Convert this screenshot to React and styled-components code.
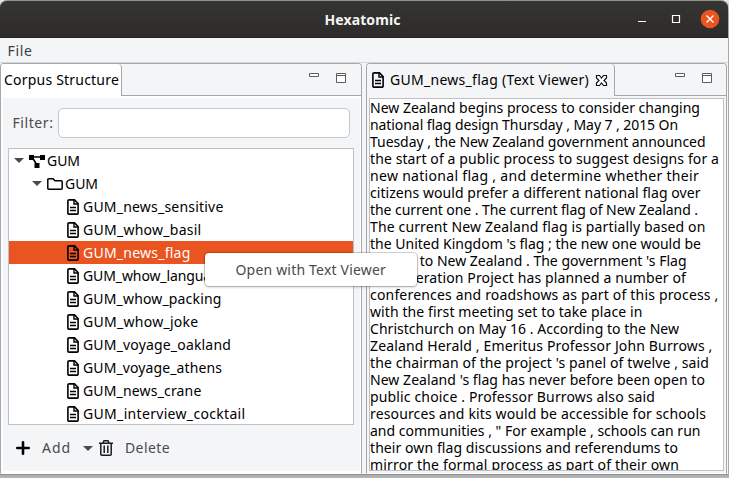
import React, { useLayoutEffect, useRef, useState } from "react";
import styled, { createGlobalStyle } from "styled-components";

const GlobalStyle = createGlobalStyle`
  * { box-sizing: border-box; }
  body { margin: 0; overflow: hidden; background: #b0b0b0; }
`;

const Window = styled.div`
  position: relative;
  width: 729px;
  height: 478px;
  padding-right: 1px;
  display: flex;
  flex-direction: column;
  overflow: hidden;
  background: linear-gradient(#e8e8e8 0, #a8a8a8 12px, #a8a8a8 473px, #b6b6b6 478px);
  font-family: "Noto Sans", sans-serif;
  font-size: 14px;
  color: #000;
`;

const TitleBar = styled.header`
  flex: none;
  height: 38px;
  display: grid;
  grid-template-columns: 1fr auto 1fr;
  align-items: center;
  border-top: 1px solid #91938e;
  border-bottom: 1px solid #242223;
  border-radius: 7px 7px 0 0;
  background: linear-gradient(#353532, #2d2b2b);
  color: #f4f4f2;
  font-weight: 700;
`;

const Title = styled.h1`
  grid-column: 2;
  margin: 2px 3px 0 0;
  font-size: 14px;
  line-height: 20px;
`;

const WindowControls = styled.div`
  display: flex;
  justify-content: flex-end;
  padding-right: 8px;
`;

const MenuBar = styled.nav`
  flex: none;
  height: 25px;
  padding: 3px 7.5px;
  background: #f4f5f7;
  border-bottom: 1px solid #d5d7d9;
  line-height: 20px;
  color: #3d3d3d;
`;

const Workbench = styled.main`
  flex: none;
  height: 412px;
  display: grid;
  grid-template-columns: 362px 361px;
  column-gap: 4px;
  padding-right: 1px;
  background: #f4f5f7;
  border-bottom: 1px solid #939393;
`;

const Panel = styled.section`
  min-width: 0;
  display: flex;
  flex-direction: column;
  border: 1px solid #a5a8aa;
  border-bottom-color: #fff;
  border-radius: 4px 4px 0 0;
  background: #fff;
  overflow: hidden;
`;

const TabBar = styled.div`
  flex: none;
  height: 32px;
  display: flex;
  background: #f4f5f7;
`;

const Tab = styled.div`
  width: ${(p) => p.$width}px;
  display: flex;
  align-items: center;
  padding-left: ${(p) => p.$inset}px;
  border-right: 1px solid #a5a8aa;
  border-radius: 0 4px 0 0;
  background: ${(p) => (p.$active ? "#fff" : "#f4f5f7")};

  & > span { margin-bottom: 2px; }
`;

const TabTools = styled.div`
  flex: 1;
  display: flex;
  justify-content: flex-end;
  padding: 8px ${(p) => p.$end}px 0 0;
  border-bottom: 1px solid #a5a8aa;
`;

const Explorer = styled.div`
  flex: 1;
  min-height: 0;
  margin: 2px 1px 2px 2px;
  padding: 10px 5px 0;
  background: #f4f5f7;
  color: #4a4a4a;
`;

const FilterRow = styled.label`
  display: flex;
  align-items: center;
  height: 30px;
  padding: 0 5px 0 4.5px;

  & > span { margin-bottom: 2px; }
`;

const FilterInput = styled.input`
  width: 291.5px;
  height: 30px;
  margin-left: 4.5px;
  padding: 0 8px;
  border: 1px solid #c2c7ce;
  border-radius: 5px;
  background: #fff;
  font: inherit;
  outline: none;
`;

const Tree = styled.ul`
  width: 346px;
  height: 277px;
  margin: 10px 0 0;
  padding: 0;
  list-style: none;
  overflow: hidden;
  border: 1px solid #bcc1c8;
  background: #fff;
  color: #000;
`;

const TreeRow = styled.li`
  height: 23px;
  display: flex;
  align-items: center;
  line-height: 21px;
  padding-left: ${(p) => p.$indent}px;
  background: ${(p) => (p.$selected ? "#e95420" : "transparent")};

  & > span { color: ${(p) => (p.$selected ? "#fff" : "#000")}; }
`;

const Glyph = styled.svg`
  flex: none;
  display: block;
  overflow: visible;
  margin-left: ${(p) => p.$before || 0}px;
  margin-right: ${(p) => p.$after || 0}px;
`;

const Actions = styled.div`
  height: 46px;
  display: flex;
  align-items: center;
  padding-left: 7px;
  color: #4a4a4a;

  & > span { margin-bottom: 2px; }
`;

const Viewer = styled.div`
  flex: 1;
  min-height: 0;
  margin: 2px;
  border: 1px solid #bcc1c8;
  background: #fff;
  overflow: hidden;
`;

const ViewerBody = styled.div`
  flex: 1;
  min-height: 0;
  display: flex;
  flex-direction: column;
  background: #f4f5f7;
`;

const Line = styled.div`
  height: 17px;
  line-height: 17px;
`;

const ContextMenu = styled.div`
  position: absolute;
  left: 205px;
  top: 253px;
  width: 212px;
  height: 33px;
  padding: 6px 0 0 30.5px;
  border-radius: 4px;
  background: #fff;
  box-shadow: 0 0 0 1px rgba(0, 0, 0, 0.16), 0 1px 3px rgba(0, 0, 0, 0.25);
  color: #4a4a4a;
  line-height: 21px;
`;

const Tracked = styled.span`
  display: inline-block;
  flex: none;
  white-space: pre;
`;

// Spaces the letters of a label so that it fills a fixed width.
function Label({ width, children }) {
  const ref = useRef(null);
  const [spacing, setSpacing] = useState(0);
  useLayoutEffect(() => {
    const range = document.createRange();
    range.selectNodeContents(ref.current);
    const natural = range.getBoundingClientRect().width;
    setSpacing((width - natural) / children.length);
  }, []);
  return (
    <Tracked ref={ref} style={{ letterSpacing: spacing, width }}>
      {children}
    </Tracked>
  );
}

function DocumentIcon(props) {
  return (
    <Glyph width="12" height="16" viewBox="0 0 12 16" {...props}>
      <path d="M1.5 .9H7.5L11.1 4.5V14.2Q11.1 15.1 10.2 15.1H1.8Q.9 15.1 .9 14.2V1.8Q.9 .9 1.8 .9Z" fill="none" stroke="#000" strokeWidth="1.6" />
      <path d="M7 1V5H11M3 8.5H9M3 11.5H9" fill="none" stroke="#000" strokeWidth="1.4" />
    </Glyph>
  );
}

function Caret(props) {
  return (
    <Glyph width="10" height="5" viewBox="0 0 10 5" {...props}>
      <path d="M0 0H10L5 5Z" fill="#4a4a4a" />
    </Glyph>
  );
}

function PanelTools() {
  return (
    <Glyph width="39" height="12" viewBox="0 0 39 12" fill="#fff" stroke="#5c5c5c">
      <path d="M.5 1.5H9.5V4.5H.5ZM27.5 1.5H36.5V10.5H27.5ZM27.5 3.5H36.5" />
    </Glyph>
  );
}

const documents = [
  ["GUM_news_sensitive", 140.5],
  ["GUM_whow_basil", 118.5],
  ["GUM_news_flag", 107.5],
  ["GUM_whow_languages", 151],
  ["GUM_whow_packing", 138.5],
  ["GUM_whow_joke", 115.5],
  ["GUM_voyage_oakland", 148],
  ["GUM_voyage_athens", 139],
  ["GUM_news_crane", 118.5],
  ["GUM_interview_cocktail", 162.5],
];

const lines = [
  ["New Zealand begins process to consider changing", 330],
  ["national flag design Thursday , May 7 , 2015 On", 308],
  ["Tuesday , the New Zealand government announced", 335.5],
  ["the start of a public process to suggest designs for a", 349],
  ["new national flag , and determine whether their", 329],
  ["citizens would prefer a different national flag over", 330.5],
  ["the current one . The current flag of New Zealand .", 328],
  ["The current New Zealand flag is partially based on", 335.5],
  ["the United Kingdom 's flag ; the new one would be", 331],
  ["unique to New Zealand . The government 's Flag", 316.5],
  ["Consideration Project has planned a number of", 316],
  ["conferences and roadshows as part of this process ,", 348.5],
  ["with the first meeting set to take place in", 272.5],
  ["Christchurch on May 16 . According to the New", 309],
  ["Zealand Herald , Emeritus Professor John Burrows ,", 342.5],
  ["the chairman of the project 's panel of twelve , said", 339],
  ["New Zealand 's flag has never before been open to", 335],
  ["public choice . Professor Burrows also said", 285],
  ["resources and kits would be accessible for schools", 336],
  ["and communities , \" For example , schools can run", 330.5],
  ["their own flag discussions and referendums to", 308],
  ["mirror the formal process as part of their own", 309],
];

export default function App() {
  return (
    <>
      <GlobalStyle />
      <Window>
        <TitleBar>
          <span />
          <Title><Label width={76}>Hexatomic</Label></Title>
          <WindowControls>
            <Glyph width="83" height="20" viewBox="637 9 83 20">
              <path d="M638 21.5H646" stroke="#fff" />
              <path d="M672.5 15.5H679.5V22.5H672.5Z" fill="none" stroke="#fff" strokeWidth="1.2" />
              <circle cx="710" cy="19" r="9.3" fill="#e95420" />
              <path d="M706.5 15.5L713.5 22.5M713.5 15.5L706.5 22.5" stroke="#fff" strokeWidth="1.4" />
            </Glyph>
          </WindowControls>
        </TitleBar>
        <MenuBar><Label width={25}>File</Label></MenuBar>
        <Workbench>
          <Panel>
            <TabBar>
              <Tab $width={121} $inset={3} $active><Label width={115}>Corpus Structure</Label></Tab>
              <TabTools $end={13}><PanelTools /></TabTools>
            </TabBar>
            <Explorer>
              <FilterRow>
                <Label width={41}>Filter:</Label>
                <FilterInput aria-label="Filter" />
              </FilterRow>
              <Tree>
                <TreeRow $indent={5}>
                  <Caret />
                  <Glyph width="16" height="14" viewBox="0 0 16 14" $before={5} $after={2}>
                    <path d="M3 3H13M3 3L8 11" stroke="#000" strokeWidth="1.5" />
                    <path d="M0 1H5V6H0ZM11 1H16V6H11ZM5.5 9H10.5V14H5.5Z" />
                  </Glyph>
                  <Label width={33}>GUM</Label>
                </TreeRow>
                <TreeRow $indent={23}>
                  <Caret />
                  <Glyph width="16" height="12" viewBox="0 0 16 12" $before={5} $after={2}>
                    <path d="M.8 1.8Q.8 .8 1.8 .8H6L8 2.8H14.2Q15.2 2.8 15.2 3.8V10.2Q15.2 11.2 14.2 11.2H1.8Q.8 11.2 .8 10.2Z" fill="none" stroke="#000" strokeWidth="1.5" />
                  </Glyph>
                  <Label width={33}>GUM</Label>
                </TreeRow>
                {documents.map(([name, width]) => (
                  <TreeRow key={name} $indent={58} $selected={name === "GUM_news_flag"}>
                    <DocumentIcon $after={4} />
                    <Label width={width}>{name}</Label>
                  </TreeRow>
                ))}
              </Tree>
              <Actions>
                <Glyph width="14" height="14" viewBox="0 0 14 14" $before={1} $after={12}>
                  <path d="M7 1.3V12.7M1.3 7H12.7" stroke="#000" strokeWidth="2.6" strokeLinecap="round" />
                </Glyph>
                <Label width={29}>Add</Label>
                <Caret $before={12} $after={6} />
                <Glyph width="14" height="16" viewBox="0 0 14 16" $after={12} fill="none" stroke="#1c1c1c" strokeWidth="1.5">
                  <path d="M0 3.2H14M4 3L5 .8H9L10 3M1.8 3.5V14.2Q1.8 15.2 2.8 15.2H11.2Q12.2 15.2 12.2 14.2V3.5" />
                  <path d="M5.2 5.5V13M8.8 5.5V13" />
                </Glyph>
                <Label width={45}>Delete</Label>
              </Actions>
            </Explorer>
          </Panel>
          <Panel>
            <TabBar>
              <Tab $width={248} $inset={5}>
                <DocumentIcon $after={6} />
                <Label width={199}>GUM_news_flag (Text Viewer)</Label>
                <Glyph width="11" height="11" viewBox="0 0 11 11" $before={7}>
                  <path d="M.5 .5H3.5L5.5 3L7.5 .5H10.5V3L8 5.5L10.5 8V10.5H7.5L5.5 8L3.5 10.5H.5V8L3 5.5L.5 3Z" fill="#fff" stroke="#111" strokeWidth="1.2" />
                </Glyph>
              </Tab>
              <TabTools $end={12}><PanelTools /></TabTools>
            </TabBar>
            <ViewerBody>
              <Viewer>
                {lines.map(([text, width]) => (
                  <Line key={text}><Label width={width}>{text}</Label></Line>
                ))}
              </Viewer>
            </ViewerBody>
          </Panel>
        </Workbench>
        <ContextMenu><Label width={150.5}>Open with Text Viewer</Label></ContextMenu>
      </Window>
    </>
  );
}
